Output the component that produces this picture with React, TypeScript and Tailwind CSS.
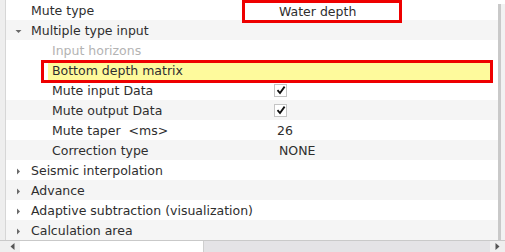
import React from "react";

type Row = {
  label: string;
  level: 0 | 1;
  arrow?: "down" | "right";
  value?: React.ReactNode;
  muted?: boolean;
  highlight?: boolean;
};

function Check() {
  return (
    <span className="flex h-[13px] w-[13px] items-center justify-center border border-[#c4c4c4] bg-white">
      <svg width="10" height="10" viewBox="0 0 10 10">
        <path d="M1.5 5.2 L4 8 L8.6 1.6" fill="none" stroke="#111" strokeWidth="1.8" />
      </svg>
    </span>
  );
}

const ROWS: Row[] = [
  { label: "Mute type", level: 0 },
  { label: "Multiple type input", level: 0, arrow: "down" },
  { label: "Input horizons", level: 1, muted: true },
  { label: "Bottom depth matrix", level: 1, highlight: true },
  { label: "Mute input Data", level: 1, value: <Check /> },
  { label: "Mute output Data", level: 1, value: <Check /> },
  { label: "Mute taper  <ms>", level: 1, value: <span className="pl-[3px] pt-[2px]">26</span> },
  { label: "Correction type", level: 1, value: <span className="pl-[5px] pt-[2px]">NONE</span> },
  { label: "Seismic interpolation", level: 0, arrow: "right" },
  { label: "Advance", level: 0, arrow: "right" },
  { label: "Adaptive subtraction (visualization)", level: 0, arrow: "right" },
  { label: "Calculation area", level: 0, arrow: "right" },
];

function Arrow({ dir }: { dir: "down" | "right" }) {
  return (
    <svg width="7" height="7" viewBox="0 0 7 7" className="absolute left-[9px] top-[8px]">
      {dir === "down" ? (
        <path d="M0.5 2 L6.5 2 L3.5 5 Z" fill="#6a6a6a" />
      ) : (
        <path d="M2 0.5 L5 3.5 L2 6.5 Z" fill="#6a6a6a" />
      )}
    </svg>
  );
}

export default function App() {
  return (
    <div
      className="relative h-[252px] w-[505px] overflow-hidden bg-white text-[12.5px] text-[#2e2e2e]"
      style={{ fontFamily: '"DejaVu Sans", sans-serif' }}
    >
      <div className="flex h-[240px]">
        <div className="w-[6px] border-r border-[#d6d6d6] bg-[#eeeeee]" />
        <div className="flex flex-1 flex-col">
          {ROWS.map((row, i) => (
            <div
              key={row.label}
              className={`relative flex h-[20px] items-center ${
                row.highlight ? "" : i % 2 === 1 ? "bg-[#f5f5f5]" : "bg-white"
              }`}
            >
              {row.highlight ? (
                <div className="absolute inset-y-0 left-[42px] right-[8px] bg-[#fefa9c]" />
              ) : null}
              {row.arrow ? <Arrow dir={row.arrow} /> : null}
              <span
                className={`relative whitespace-pre pt-[2px] ${row.level === 0 ? "pl-[25px]" : "pl-[46px]"} ${
                  row.muted ? "text-[#b3b3b3]" : ""
                }`}
              >
                {row.label}
              </span>
              {row.value ? (
                <div className="absolute left-[268px] top-0 flex h-[20px] items-center">{row.value}</div>
              ) : null}
            </div>
          ))}
        </div>
        <div className="flex w-[7px] pt-[4px]">
          <div className="w-[3px] bg-[#c9c9c9]" />
          <div className="flex-1 bg-[#f2f2f2]" />
        </div>
      </div>

      <div className="flex h-[12px] border-t border-[#c9c9c9] bg-[#e4e3e6]">
        <div className="flex w-[20px] items-center justify-center bg-[#efefef] pl-[5px]">
          <svg width="5" height="7" viewBox="0 0 5 7">
            <path d="M4.5 0 L0.5 3.5 L4.5 7 Z" fill="#555" />
          </svg>
        </div>
        <div className="w-[184px] border-r border-[#cfcfcf] bg-white" />
        <div className="flex-1" />
        <div className="flex w-[15px] items-center justify-center bg-[#efefef]">
          <svg width="5" height="7" viewBox="0 0 5 7">
            <path d="M0.5 0 L4.5 3.5 L0.5 7 Z" fill="#555" />
          </svg>
        </div>
      </div>

      {/* annotation boxes */}
      <div className="absolute left-[242px] top-0 flex h-[23px] w-[160px] items-center border-[3px] border-[#ee0000] bg-white pl-[34px] pt-[1px]">
        Water depth
      </div>
      <div className="absolute left-[41px] top-[60px] h-[23px] w-[452px] border-[3px] border-[#ee0000]" />
    </div>
  );
}
